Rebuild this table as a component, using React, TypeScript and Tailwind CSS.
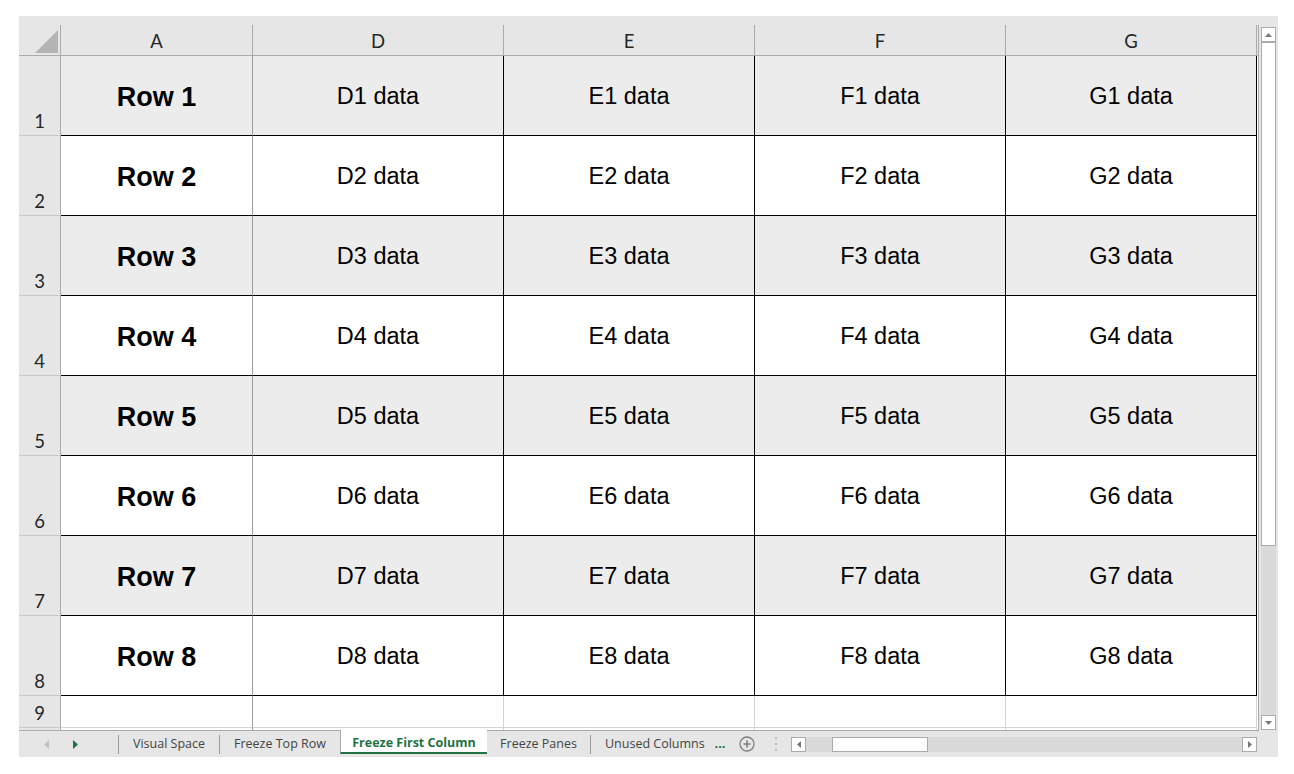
import React from 'react'

const cellFont = "font-['Liberation_Sans',Arial,sans-serif]"
const headFont = "font-['Lato','Open_Sans',sans-serif]"
const tabFont = "font-['Open_Sans','Noto_Sans',sans-serif]"

const dataCols = ['D', 'E', 'F', 'G']
const rows = [1, 2, 3, 4, 5, 6, 7, 8]

function CornerCell() {
  return (
    <div className="w-[42px] h-full border-r border-[#ababab] flex items-end justify-end pr-[2px] pb-[2px]">
      <svg width="23" height="23" viewBox="0 0 23 23">
        <polygon points="23,0 23,23 0,23" fill="#b4b4b4" />
      </svg>
    </div>
  )
}

function HeaderRow() {
  return (
    <div className={`flex h-[31px] border-b border-[#ababab] bg-[#e6e6e6] text-[18.5px] text-[#262626] ${headFont}`}>
      <CornerCell />
      <div className="w-[192px] border-r border-[#ababab] flex items-center justify-center pt-[4px]">A</div>
      {dataCols.map(c => (
        <div key={c} className="w-[251px] border-r border-[#ababab] flex items-center justify-center pt-[4px]">
          {c}
        </div>
      ))}
    </div>
  )
}

function DataRow({ n }: { n: number }) {
  const shaded = n % 2 === 1
  const bg = shaded ? 'bg-[#ececec]' : 'bg-white'
  return (
    <div className="flex h-[80px]">
      <div className={`w-[42px] bg-[#e6e6e6] border-r border-b border-r-[#ababab] border-b-[#c8c8c8] flex items-end justify-center pb-[3px] text-[18.5px] leading-[22px] text-[#262626] ${headFont}`}>
        {n}
      </div>
      <div className={`w-[192px] ${bg} border-r border-b border-r-[#9e9e9e] border-b-black flex items-center justify-center pt-[3px] text-[27px] font-bold text-black ${cellFont}`}>
        Row {n}
      </div>
      {dataCols.map(c => (
        <div
          key={c}
          className={`w-[251px] ${bg} border-r border-b border-black flex items-center justify-center pt-[2px] text-[23.5px] text-black ${cellFont}`}
        >
          {c}{n} data
        </div>
      ))}
    </div>
  )
}

function EmptyRow({ label, height, bottom }: { label?: string; height: string; bottom: boolean }) {
  const b = bottom ? 'border-b' : ''
  return (
    <div className={`flex ${height}`}>
      <div className={`w-[42px] bg-[#e6e6e6] border-r ${b} border-r-[#ababab] border-b-[#c8c8c8] flex items-end justify-center pb-[3px] text-[18.5px] leading-[22px] text-[#262626] ${headFont}`}>
        {label}
      </div>
      <div className={`w-[192px] bg-white border-r ${b} border-r-[#9e9e9e] border-b-[#d4d4d4]`} />
      {dataCols.map(c => (
        <div key={c} className={`w-[251px] bg-white border-r ${b} border-[#d4d4d4]`} />
      ))}
    </div>
  )
}

function VScrollbar() {
  return (
    <div className="w-[19px] h-full flex flex-col pl-[2px] pt-[2px] bg-[#e6e6e6]">
      <div className="w-[15px] h-[15px] bg-white border border-[#ababab] flex items-center justify-center">
        <svg width="7" height="4" viewBox="0 0 7 4">
          <polygon points="3.5,0 7,4 0,4" fill="#777" />
        </svg>
      </div>
      <div className="w-[15px] h-[504px] bg-white border border-[#ababab]" />
      <div className="w-[15px] flex-1 bg-[#dadada]" />
      <div className="w-[15px] h-[15px] bg-white border border-[#ababab] flex items-center justify-center">
        <svg width="7" height="4" viewBox="0 0 7 4">
          <polygon points="0,0 7,0 3.5,4" fill="#777" />
        </svg>
      </div>
    </div>
  )
}

function Sep() {
  return (
    <div className="w-[1px] h-full border-t border-[#ababab] flex items-center">
      <div className="w-[1px] h-[19px] bg-[#9a9a9a]" />
    </div>
  )
}

function Tab({ label, w }: { label: string; w: string }) {
  return (
    <div className={`${w} h-full border-t border-[#ababab] flex items-center justify-center text-[12.5px] text-[#444] ${tabFont}`}>
      {label}
    </div>
  )
}

function TabBar() {
  return (
    <div className="flex h-[27px] bg-[#e6e6e6]">
      <div className="w-[99px] h-full border-t border-[#ababab] flex items-center">
        <svg className="ml-[25px]" width="5" height="9" viewBox="0 0 5 9">
          <polygon points="5,0 5,9 0,4.5" fill="#c2c2c2" />
        </svg>
        <svg className="ml-[24px]" width="5" height="9" viewBox="0 0 5 9">
          <polygon points="0,0 5,4.5 0,9" fill="#217346" />
        </svg>
      </div>
      <Sep />
      <Tab label="Visual Space" w="w-[100px]" />
      <Sep />
      <Tab label="Freeze Top Row" w="w-[120px]" />
      <div className="w-[147px] h-[24px] bg-white border-l border-b-2 border-l-[#ababab] border-b-[#217346] flex items-center justify-center pt-[5px]">
        <span className={`text-[12.5px] font-bold text-[#217346] ${tabFont}`}>Freeze First Column</span>
      </div>
      <Tab label="Freeze Panes" w="w-[103px]" />
      <Sep />
      <div className={`w-[117px] h-full border-t border-[#ababab] flex items-center pl-[14px] text-[12.5px] text-[#444] whitespace-nowrap overflow-hidden ${tabFont}`}>
        Unused Columns
      </div>
      <div className={`w-[24px] h-full border-t border-[#ababab] flex items-center justify-center text-[13px] font-bold text-[#217346] ${tabFont}`}>
        ...
      </div>
      <div className="w-[29px] h-full border-t border-[#ababab] flex items-center justify-center">
        <svg width="16" height="16" viewBox="0 0 16 16">
          <circle cx="8" cy="8" r="7" fill="none" stroke="#808080" strokeWidth="1.3" />
          <path d="M8 4.5V11.5M4.5 8H11.5" stroke="#808080" strokeWidth="1.6" />
        </svg>
      </div>
      <div className="w-[29px] h-full border-t border-[#ababab] flex flex-col items-center justify-center gap-[4px]">
        <div className="w-[2px] h-[2px] bg-[#bdbdbd]" />
        <div className="w-[2px] h-[2px] bg-[#bdbdbd]" />
        <div className="w-[2px] h-[2px] bg-[#bdbdbd]" />
      </div>
      <div className="w-[1px] h-full border-t border-[#ababab]" />
      <div className="w-[466px] h-full border-t border-[#ababab] pt-[6px]">
        <div className="flex h-[15px]">
          <div className="w-[15px] h-[15px] bg-white border border-[#ababab] flex items-center justify-center">
            <svg width="4" height="7" viewBox="0 0 4 7">
              <polygon points="4,0 4,7 0,3.5" fill="#777" />
            </svg>
          </div>
          <div className="flex-1 bg-[#dadada] pl-[26px]">
            <div className="w-[96px] h-[15px] bg-white border border-[#ababab]" />
          </div>
          <div className="w-[15px] h-[15px] bg-white border border-[#ababab] flex items-center justify-center">
            <svg width="4" height="7" viewBox="0 0 4 7">
              <polygon points="0,0 4,3.5 0,7" fill="#777" />
            </svg>
          </div>
        </div>
      </div>
      <div className="w-[2px] h-full border-t border-[#ababab]" />
      <div className="w-[19px] h-full" />
    </div>
  )
}

export default function App() {
  return (
    <div className="w-[1294px] h-[774px] bg-white pt-[16px] pl-[19px]">
      <div className="w-[1259px] h-[741px] bg-[#e6e6e6] flex flex-col">
        <div className="h-[9px]" />
        <div className="flex h-[705px]">
          <div className="w-[1240px] h-full border-r border-[#ababab] flex flex-col">
            <HeaderRow />
            <div className="flex-1 bg-white">
              {rows.map(n => (
                <DataRow key={n} n={n} />
              ))}
              <EmptyRow label="9" height="h-[32px]" bottom />
              <EmptyRow height="h-[2px]" bottom={false} />
            </div>
          </div>
          <VScrollbar />
        </div>
        <TabBar />
      </div>
    </div>
  )
}
